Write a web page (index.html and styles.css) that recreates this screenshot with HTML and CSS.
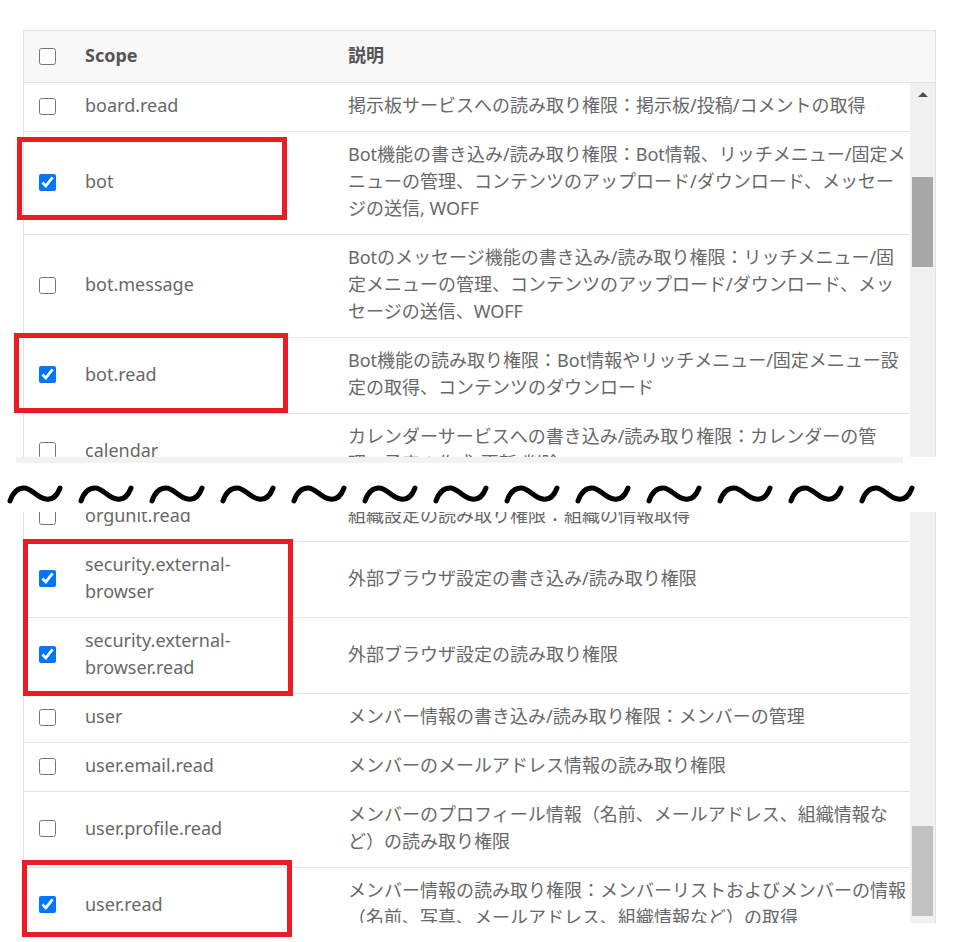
FILE: index.html
```html
<html>
    <head>
        <title>Scope</title>
        <link rel="stylesheet" href="styles.css">
    </head>
    <body>
        <div class="page">
            <div class="shot shot-top">
                <div class="head">
                    <div class="c-check"><input class="cb" type="checkbox"></div>
                    <div class="c-scope">Scope</div>
                    <div class="c-desc">説明</div>
                </div>
                <div class="body body-top">
                    <div class="rows">
                        <div class="row">
                            <div class="c-check"><input class="cb" type="checkbox"></div>
                            <div class="c-scope">board.read</div>
                            <div class="c-desc">掲示板サービスへの読み取り権限：掲示板/投稿/コメントの取得</div>
                        </div>
                        <div class="row">
                            <div class="c-check"><input class="cb" type="checkbox" checked></div>
                            <div class="c-scope">bot</div>
                            <div class="c-desc">Bot機能の書き込み/読み取り権限：Bot情報、リッチメニュー/固定メニューの管理、コンテンツのアップロード/ダウンロード、メッセージの送信, WOFF</div>
                        </div>
                        <div class="row">
                            <div class="c-check"><input class="cb" type="checkbox"></div>
                            <div class="c-scope">bot.message</div>
                            <div class="c-desc">Botのメッセージ機能の書き込み/読み取り権限：リッチメニュー/固定メニューの管理、コンテンツのアップロード/ダウンロード、メッセージの送信、WOFF</div>
                        </div>
                        <div class="row">
                            <div class="c-check"><input class="cb" type="checkbox" checked></div>
                            <div class="c-scope">bot.read</div>
                            <div class="c-desc">Bot機能の読み取り権限：Bot情報やリッチメニュー/固定メニュー設定の取得、コンテンツのダウンロード</div>
                        </div>
                        <div class="row">
                            <div class="c-check"><input class="cb" type="checkbox"></div>
                            <div class="c-scope">calendar</div>
                            <div class="c-desc">カレンダーサービスへの書き込み/読み取り権限：カレンダーの管理、予定の作成/更新/削除</div>
                        </div>
                    </div>
                    <div class="sbar">
                        <span class="arrow"></span>
                        <span class="thumb thumb-top"></span>
                    </div>
                </div>
            </div>

            <div class="cut"></div>

            <div class="waves">
                <svg class="tilde" viewBox="0 0 56 22"><path d="M3,18 C6,9 11,5 17,5 C25,5 30,15 39,16 C45,17 50,13 53,5"/></svg>
                <svg class="tilde" viewBox="0 0 56 22"><path d="M3,18 C6,9 11,5 17,5 C25,5 30,15 39,16 C45,17 50,13 53,5"/></svg>
                <svg class="tilde" viewBox="0 0 56 22"><path d="M3,18 C6,9 11,5 17,5 C25,5 30,15 39,16 C45,17 50,13 53,5"/></svg>
                <svg class="tilde" viewBox="0 0 56 22"><path d="M3,18 C6,9 11,5 17,5 C25,5 30,15 39,16 C45,17 50,13 53,5"/></svg>
                <svg class="tilde" viewBox="0 0 56 22"><path d="M3,18 C6,9 11,5 17,5 C25,5 30,15 39,16 C45,17 50,13 53,5"/></svg>
                <svg class="tilde" viewBox="0 0 56 22"><path d="M3,18 C6,9 11,5 17,5 C25,5 30,15 39,16 C45,17 50,13 53,5"/></svg>
                <svg class="tilde" viewBox="0 0 56 22"><path d="M3,18 C6,9 11,5 17,5 C25,5 30,15 39,16 C45,17 50,13 53,5"/></svg>
                <svg class="tilde" viewBox="0 0 56 22"><path d="M3,18 C6,9 11,5 17,5 C25,5 30,15 39,16 C45,17 50,13 53,5"/></svg>
                <svg class="tilde" viewBox="0 0 56 22"><path d="M3,18 C6,9 11,5 17,5 C25,5 30,15 39,16 C45,17 50,13 53,5"/></svg>
                <svg class="tilde" viewBox="0 0 56 22"><path d="M3,18 C6,9 11,5 17,5 C25,5 30,15 39,16 C45,17 50,13 53,5"/></svg>
                <svg class="tilde" viewBox="0 0 56 22"><path d="M3,18 C6,9 11,5 17,5 C25,5 30,15 39,16 C45,17 50,13 53,5"/></svg>
                <svg class="tilde" viewBox="0 0 56 22"><path d="M3,18 C6,9 11,5 17,5 C25,5 30,15 39,16 C45,17 50,13 53,5"/></svg>
                <svg class="tilde" viewBox="0 0 56 22"><path d="M3,18 C6,9 11,5 17,5 C25,5 30,15 39,16 C45,17 50,13 53,5"/></svg>
            </div>

            <div class="shot shot-bottom">
                <div class="body body-bottom">
                    <div class="rows rows-shifted">
                        <div class="row">
                            <div class="c-check"><input class="cb" type="checkbox"></div>
                            <div class="c-scope">orgunit.read</div>
                            <div class="c-desc">組織設定の読み取り権限：組織の情報取得</div>
                        </div>
                        <div class="row">
                            <div class="c-check"><input class="cb" type="checkbox" checked></div>
                            <div class="c-scope">security.external-browser</div>
                            <div class="c-desc">外部ブラウザ設定の書き込み/読み取り権限</div>
                        </div>
                        <div class="row">
                            <div class="c-check"><input class="cb" type="checkbox" checked></div>
                            <div class="c-scope">security.external-browser.read</div>
                            <div class="c-desc">外部ブラウザ設定の読み取り権限</div>
                        </div>
                        <div class="row">
                            <div class="c-check"><input class="cb" type="checkbox"></div>
                            <div class="c-scope">user</div>
                            <div class="c-desc">メンバー情報の書き込み/読み取り権限：メンバーの管理</div>
                        </div>
                        <div class="row">
                            <div class="c-check"><input class="cb" type="checkbox"></div>
                            <div class="c-scope">user.email.read</div>
                            <div class="c-desc">メンバーのメールアドレス情報の読み取り権限</div>
                        </div>
                        <div class="row">
                            <div class="c-check"><input class="cb" type="checkbox"></div>
                            <div class="c-scope">user.profile.read</div>
                            <div class="c-desc">メンバーのプロフィール情報（名前、メールアドレス、組織情報など）の読み取り権限</div>
                        </div>
                        <div class="row">
                            <div class="c-check"><input class="cb" type="checkbox" checked></div>
                            <div class="c-scope">user.read</div>
                            <div class="c-desc">メンバー情報の読み取り権限：メンバーリストおよびメンバーの情報（名前、写真、メールアドレス、組織情報など）の取得</div>
                        </div>
                    </div>
                    <div class="sbar">
                        <span class="thumb thumb-bottom"></span>
                    </div>
                </div>
            </div>

            <div class="mark mark-bot"></div>
            <div class="mark mark-botread"></div>
            <div class="mark mark-security"></div>
            <div class="mark mark-userread"></div>
        </div>
    </body>
</html>
```

FILE: styles.css
```css
body {
        margin: 0;
        background: #fff;
        font-family: "Noto Sans", "Noto Sans CJK JP", sans-serif;
        font-size: 18px;
        line-height: 27px;
        color: #686868;}

.page {
        position: relative;
        padding-top: 30px;}

/* two cut-out pieces of the same table */
.shot {
        box-sizing: border-box;
        width: 913px;
        margin-left: 23px;
        border-left: 1px solid #e2e2e2;
        border-right: 1px solid #e2e2e2;
        overflow: hidden;}

.shot-top {
        height: 427px;
        border-top: 1px solid #e2e2e2;}

.shot-bottom {height: 411px;}

.head {
        box-sizing: border-box;
        display: grid;
        grid-template-columns: 46px 278px 1fr;
        align-items: center;
        height: 52px;
        padding-bottom: 2px;
        background: #f8f8f8;
        border-bottom: 1px solid #e2e2e2;
        font-weight: bold;
        color: #555;}

.head .c-check {padding-top: 2px;}

.body {display: flex;}
.body-top {height: 374px;}
.body-bottom {height: 411px;}

.rows {width: 886px;}
.rows-shifted {margin-top: -19px;}

.row {
        display: grid;
        grid-template-columns: 46px 278px 1fr;
        align-items: center;
        padding: 9px 0 12px;
        border-bottom: 1px solid #e4e4e4;}

.c-check {
        display: flex;
        padding-left: 15px;
        padding-top: 1px;}

.c-scope {padding: 0 80px 0 15px;}

.cb {
        display: block;
        width: 17px;
        height: 17px;
        margin: 0;}

.sbar {
        display: flex;
        flex-direction: column;
        align-items: center;
        width: 25px;
        background: #f1f1f1;}

.arrow {
        margin-top: 9px;
        border-left: 5px solid transparent;
        border-right: 5px solid transparent;
        border-bottom: 5px solid #505050;}

.thumb {
        display: block;
        width: 21px;
        height: 90px;}

.thumb-top {
        margin-top: 80px;
        background: #a8a8a8;}

.thumb-bottom {
        margin-top: 314px;
        background: #c1c1c1;}

.cut {
        width: 887px;
        height: 6px;
        margin-left: 16px;
        background: #f2f2f2;}

.waves {
        box-sizing: border-box;
        display: flex;
        gap: 15px;
        height: 49px;
        padding: 0 0 7px 7px;
        align-items: flex-end;}

.tilde {
        width: 56px;
        height: 22px;
        flex: none;}

.tilde path {
        fill: none;
        stroke: #000;
        stroke-width: 5;
        stroke-linecap: round;}

/* red annotation frames */
.mark {
        position: absolute;
        box-sizing: border-box;
        border: 5px solid #ed1c24;}

.mark-bot {left: 17px; top: 137px; width: 270px; height: 83px;}
.mark-botread {left: 14px; top: 333px; width: 274px; height: 80px;}
.mark-security {left: 23px; top: 539px; width: 270px; height: 157px;}
.mark-userread {left: 22px; top: 860px; width: 270px; height: 77px;}
```
